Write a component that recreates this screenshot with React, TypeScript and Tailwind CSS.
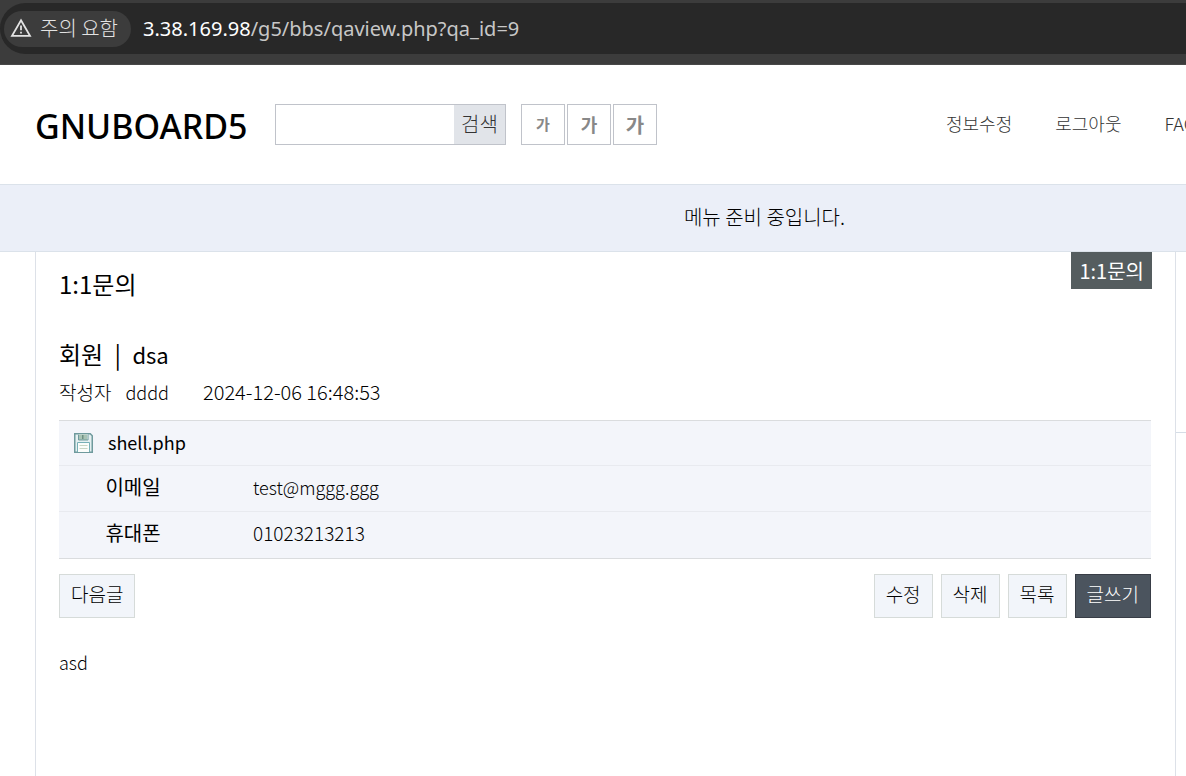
const navLinks = ["정보수정", "로그아웃", "FAQ"]

const fontSizes = [
  { id: "small", className: "text-[15px]" },
  { id: "normal", className: "text-[18px]" },
  { id: "large", className: "text-[20px]" },
]

const contacts = [
  { label: "이메일", value: "test@mggg.ggg", valueClass: "text-[18px]" },
  { label: "휴대폰", value: "01023213213", valueClass: "text-[19px]" },
]

function WarningIcon() {
  return (
    <svg width="22" height="20" viewBox="0 0 22 20" fill="none" aria-hidden="true">
      <path d="M11 2.2 20 17.8H2z" stroke="#e3e3e3" strokeWidth="1.8" />
      <path d="M11 7.5v4.8M11 13.7v1.9" stroke="#e3e3e3" strokeWidth="1.8" />
    </svg>
  )
}

function AddressBar() {
  return (
    <div className="h-[65px] border-b border-[#484848] bg-[#3c3c3c] pt-[3px]">
      <div className="flex h-[51px] items-center rounded-l-full bg-[#282828] pl-1">
        <button className="flex h-9 items-center gap-2 rounded-full bg-[#3c3c3c] pr-[13px] pb-[2px] pl-[6px] text-[20px] text-[#e3e3e3]">
          <WarningIcon />
          주의 요함
        </button>
        <span className="ml-3 font-['Noto_Sans','Noto_Sans_CJK_KR',sans-serif] text-[20px] font-normal text-[#c7c7c7]">
          <span className="text-white">3.38.169.98</span>/g5/bbs/qaview.php?qa_id=9
        </span>
      </div>
    </div>
  )
}

function SiteHeader() {
  return (
    <header className="flex h-[119px] items-center pl-[35px]">
      <a href="#" className="w-[240px] pt-[3px] font-['Noto_Sans',sans-serif] text-[34px] font-medium text-black">
        GNUBOARD5
      </a>
      <form className="flex h-[41px] w-[231px] border border-[#c0c3ca]">
        <input type="text" aria-label="검색어" className="min-w-0 flex-1 bg-white px-2 outline-none" />
        <button type="button" className="w-[51px] bg-[#e1e4e9] pb-[2px] text-[20px] text-[#333]">
          검색
        </button>
      </form>
      <div className="ml-[15px] flex gap-[2px]">
        {fontSizes.map((size) => (
          <button
            key={size.id}
            className={`h-[41px] w-11 border border-[#c0c3ca] font-bold text-[#888] ${size.className}`}
          >
            가
          </button>
        ))}
      </div>
      <nav className="ml-auto flex w-[583px] gap-[43px] pb-[2px] text-[18px] text-[#333]">
        {navLinks.map((link) => (
          <a key={link} href="#">
            {link}
          </a>
        ))}
      </nav>
    </header>
  )
}

function FloppyIcon() {
  return (
    <svg width="19" height="20" viewBox="0 0 19 20" fill="none" aria-hidden="true">
      <path d="M.75 .75h15.5l2 2v16.5H.75z" fill="#e5f0f1" stroke="#6f9a9d" strokeWidth="1.5" />
      <path d="M4 1.5h10v6H4z" fill="#f4f9f9" />
      <path d="M5 1.5h8v5.5H5z" fill="#a9c4b5" />
      <path d="M8 2h1.5v4H8z" fill="#6f8f83" />
      <path d="M4.5 1.5v5.5h9.5V1.5" stroke="#6f9a9d" />
      <path d="M3.5 19V9.5h12V19" fill="#fbfdfb" stroke="#78b0b7" />
      <path d="M5.5 12.5h8M5.5 15.5h8" stroke="#c9d6c4" strokeWidth="1.2" />
    </svg>
  )
}

function PostButton({ children, dark = false }: { children: string; dark?: boolean }) {
  const color = dark ? "border-[#383d46] bg-[#4b545e] text-white" : "border-[#d6dbd9] bg-[#f2f5fa] text-black"
  return <button className={`h-11 border px-[11px] pb-[3px] text-[19px] ${color}`}>{children}</button>
}

function Inquiry() {
  return (
    <main className="min-h-[525px] flex-1 border-x border-[#dde1e8] pr-6 pl-[23px]">
      <div className="-mr-px flex items-start justify-between">
        <h1 className="pt-4 text-[24px] leading-8 font-normal">1:1문의</h1>
        <a href="#" className="flex h-[37px] items-center bg-[#555d5f] px-2 text-[20px] font-normal text-white">
          1:1문의
        </a>
      </div>
      <article>
        <h2 className="mt-[38px] text-[24px] leading-8 font-normal">
          회원 <span className="mx-[6px]">|</span> <span className="text-[22px]">dsa</span>
        </h2>
        <p className="mt-2 flex text-[19px] leading-7">
          작성자 <span className="ml-[14px] text-[18px]">dddd</span>
          <time className="ml-[34px] text-[20px]">2024-12-06 16:48:53</time>
        </p>
        <div className="mt-[14px] border-y border-[#dadcde] bg-[#f3f5fa]">
          <a href="#" className="flex h-11 items-center gap-[15px] pl-[15px] text-[18px] font-normal">
            <FloppyIcon />
            <span className="pb-[2px]">shell.php</span>
          </a>
          <table className="w-full">
            <tbody>
              {contacts.map((row) => (
                <tr key={row.label} className="h-[46px] border-t border-[#e8eaef]">
                  <th scope="row" className="w-[194px] pr-[46px] pb-[3px] text-center text-[20px] font-normal">
                    {row.label}
                  </th>
                  <td className={`pb-[3px] ${row.valueClass}`}>{row.value}</td>
                </tr>
              ))}
            </tbody>
          </table>
        </div>
        <div className="mt-[15px] flex justify-between">
          <PostButton>다음글</PostButton>
          <div className="flex gap-2">
            <PostButton>수정</PostButton>
            <PostButton>삭제</PostButton>
            <PostButton>목록</PostButton>
            <PostButton dark>글쓰기</PostButton>
          </div>
        </div>
        <p className="mt-[30px] text-[18px] leading-7">asd</p>
      </article>
    </main>
  )
}

export default function App() {
  return (
    <div className="min-h-screen overflow-x-hidden bg-white font-['Noto_Sans_CJK_KR',sans-serif] font-light text-black">
      <AddressBar />
      <div className="min-w-[1529px]">
        <SiteHeader />
        <div className="flex h-[68px] items-center justify-center border-y border-[#dbe2ea] bg-[#ebeff8] pb-[2px] text-[20px]">
          메뉴 준비 중입니다.
        </div>
        <div className="mx-[35px] flex">
          <Inquiry />
          <aside className="w-[318px] pt-[180px]">
            <hr className="border-[#d5dde6]" />
          </aside>
        </div>
      </div>
    </div>
  )
}
